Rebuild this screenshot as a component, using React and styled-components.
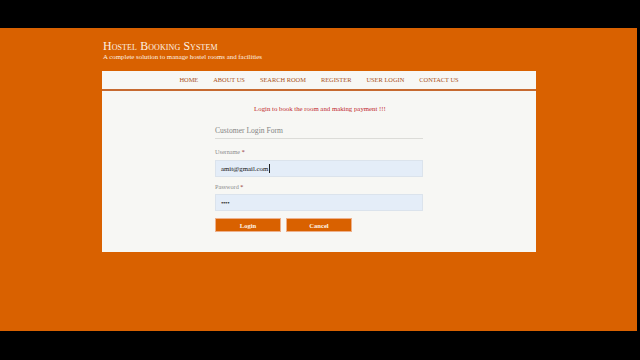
import React from "react";
import styled, { createGlobalStyle } from "styled-components";

const Global = createGlobalStyle`
  html, body { margin: 0; padding: 0; background: #000; }
  body { font-family: "Liberation Serif", "DejaVu Serif", serif; }
  * { box-sizing: border-box; }
`;

const Screen = styled.div`
  width: 640px;
  height: 360px;
  background: #000;
  padding-top: 28px;
  overflow: hidden;
`;

const Stage = styled.div`
  width: 637px;
  height: 303px;
  background: #d96100;
  padding-top: 12px;
`;

const Wrap = styled.div`
  width: 434px;
  margin: 0 0 0 102px;
`;

const Header = styled.header`
  padding-left: 1px;
  margin-bottom: 10px;
`;

const Title = styled.h1`
  margin: 0;
  font-size: 11.9px;
  line-height: 12px;
  font-weight: normal;
  font-variant: small-caps;
  color: #fdf1e4;
  letter-spacing: 0.1px;
`;

const Subtitle = styled.p`
  margin: 1px 0 0;
  font-size: 6.85px;
  line-height: 8px;
  color: #fdf1e4;
`;

const Nav = styled.nav`
  height: 20px;
  background: #f7f7f4;
  border-bottom: 2px solid #c66a30;
  display: flex;
  justify-content: center;
  align-items: center;
  gap: 15px;
`;

const NavItem = styled.a`
  font-size: 6.4px;
  line-height: 8px;
  color: #a9511a;
  text-transform: uppercase;
  text-decoration: none;
`;

const Panel = styled.main`
  background: #f7f7f4;
  padding: 13px 0 20px;
  height: 161px;
`;

const Notice = styled.p`
  margin: 0;
  text-align: center;
  font-size: 6.8px;
  line-height: 10px;
  color: #c1272d;
  padding-left: 2px;
`;

const Form = styled.form`
  width: 208px;
  margin: 12px auto 0;
`;

const Legend = styled.div`
  font-size: 7.6px;
  line-height: 10px;
  color: #858585;
  padding-bottom: 2px;
  border-bottom: 1px solid #dcdcd8;
`;

const Label = styled.label`
  display: block;
  margin-top: ${(p) => p.$mt}px;
  font-size: 6.2px;
  line-height: 8px;
  color: #8c8c8c;
`;

const Star = styled.span`
  color: #8e2a2a;
`;

const Field = styled.div`
  margin-top: ${(p) => p.$mt}px;
  height: 17px;
  background: #e4edf8;
  border: 1px solid #dbe3ec;
  display: flex;
  align-items: center;
  padding-left: 5px;
  font-size: 6.8px;
  color: #111;
`;

const Caret = styled.span`
  display: inline-block;
  width: 1px;
  height: 9px;
  background: #222;
  margin-left: 0.5px;
`;

const Dots = styled.span`
  font-size: 7px;
  letter-spacing: -0.4px;
  color: #333;
`;

const Buttons = styled.div`
  display: flex;
  gap: 5px;
  margin-top: 7px;
`;

const Button = styled.button`
  width: 66px;
  height: 14px;
  padding: 0;
  background: #d96100;
  border: 0.5px solid #eeb08a;
  color: #fff3e6;
  font-family: "Liberation Serif", serif;
  font-weight: bold;
  font-size: 6.6px;
  line-height: 13px;
`;

const links = ["Home", "About Us", "Search Room", "Register", "User Login", "Contact Us"];

export default function App() {
  return (
    <Screen>
      <Global />
      <Stage>
        <Wrap>
          <Header>
            <Title>Hostel Booking System</Title>
            <Subtitle>A complete solution to manage hostel rooms and facilities</Subtitle>
          </Header>
          <Nav>
            {links.map((l) => (
              <NavItem key={l} href="#">
                {l}
              </NavItem>
            ))}
          </Nav>
          <Panel>
            <Notice>Login to book the room and making payment !!!</Notice>
            <Form onSubmit={(e) => e.preventDefault()}>
              <Legend>Customer Login Form</Legend>
              <Label $mt={9}>
                Username <Star>*</Star>
              </Label>
              <Field $mt={4}>
                amit@gmail.com
                <Caret />
              </Field>
              <Label $mt={6}>
                Password <Star>*</Star>
              </Label>
              <Field $mt={3}>
                <Dots>••••</Dots>
              </Field>
              <Buttons>
                <Button type="submit">Login</Button>
                <Button type="button">Cancel</Button>
              </Buttons>
            </Form>
          </Panel>
        </Wrap>
      </Stage>
    </Screen>
  );
}
